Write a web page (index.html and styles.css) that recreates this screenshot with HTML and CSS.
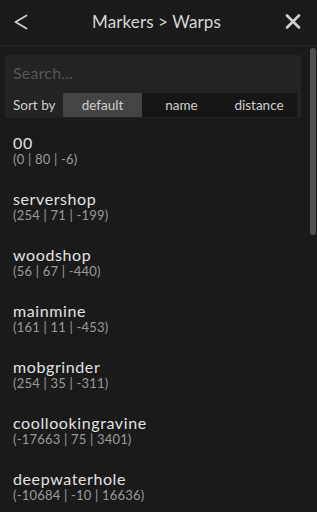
FILE: index.html
```html
<!DOCTYPE html>
<html>
<head>
<meta charset="utf-8">
<link rel="stylesheet" href="styles.css">
</head>
<body>
<div class="app">
  <header class="header">
    <svg class="icon back" width="14" height="16" viewBox="0 0 14 16"><polyline points="12.5,1.5 1.5,8 12.5,14.5" fill="none" stroke="#cfcfcf" stroke-width="1.8" stroke-linecap="round" stroke-linejoin="round"/></svg>
    <div class="title">Markers &gt; Warps</div>
    <svg class="icon close" width="16" height="15" viewBox="0 0 16 15"><path d="M2 1.5 L14 13.5 M14 1.5 L2 13.5" fill="none" stroke="#cfcfcf" stroke-width="2.6" stroke-linecap="round"/></svg>
  </header>
  <main class="content">
    <div class="panel">
      <div class="search">Search...</div>
      <div class="sort">
        <span class="sort-label">Sort by</span>
        <div class="btn active">default</div>
        <div class="btn">name</div>
        <div class="btn">distance</div>
      </div>
    </div>
    <ul class="list">
      <li class="item"><div class="name">00</div><div class="pos">(0 | 80 | -6)</div></li>
      <li class="item"><div class="name">servershop</div><div class="pos">(254 | 71 | -199)</div></li>
      <li class="item"><div class="name">woodshop</div><div class="pos">(56 | 67 | -440)</div></li>
      <li class="item"><div class="name">mainmine</div><div class="pos">(161 | 11 | -453)</div></li>
      <li class="item"><div class="name">mobgrinder</div><div class="pos">(254 | 35 | -311)</div></li>
      <li class="item"><div class="name">coollookingravine</div><div class="pos">(-17663 | 75 | 3401)</div></li>
      <li class="item"><div class="name">deepwaterhole</div><div class="pos">(-10684 | -10 | 16636)</div></li>
    </ul>
    <div class="scroll-thumb"></div>
  </main>
</div>
</body>
</html>
```

FILE: styles.css
```css
* { box-sizing: border-box; }
html, body {
  margin: 0;
  padding: 0;
  background: #1a1a1a;
  overflow: hidden;
}
body {
  font-family: Lato, "Noto Sans", sans-serif;
  color: #dedede;
}
.app {
  width: 317px;
  height: 512px;
  display: flex;
  flex-direction: column;
  overflow: hidden;
}
.header {
  height: 46px;
  flex: none;
  display: flex;
  align-items: center;
  justify-content: space-between;
  padding: 0 16px 2px 14px;
  border-bottom: 1px solid #262626;
}
.title {
  font-size: 17px;
  color: #d6d6d6;
  letter-spacing: 0.1px;
}
.content {
  position: relative;
  flex: 1;
  padding: 9px 16px 0 5px;
  overflow: hidden;
}
.panel {
  background: #232323;
  padding: 0 3px 1px 8px;
}
.search {
  height: 38px;
  padding-bottom: 3px;
  display: flex;
  align-items: center;
  font-size: 16px;
  letter-spacing: 0.2px;
  color: #555;
}
.sort {
  display: flex;
  align-items: stretch;
  height: 24px;
  font-size: 13.5px;
}
.sort-label {
  display: flex;
  align-items: center;
  width: 50px;
  color: #d0d0d0;
}
.btn {
  display: flex;
  align-items: center;
  justify-content: center;
  background: #161616;
  color: #cfcfcf;
  width: 79px;
}
.btn.active { background: #444; }
.btn:last-child { width: 76px; }
.list {
  list-style: none;
  margin: 15px 0 0 0;
  padding: 0 0 0 8px;
}
.item {
  height: 56px;
}
.name {
  font-size: 16px;
  line-height: 20px;
  letter-spacing: 0.6px;
  color: #e2e2e2;
}
.pos {
  font-size: 13px;
  line-height: 13px;
  letter-spacing: 0.2px;
  color: #9a9a9a;
}
.scroll-thumb {
  position: absolute;
  right: 1px;
  top: 2px;
  width: 6px;
  height: 187px;
  background: #505050;
  border-radius: 3px;
}
```
